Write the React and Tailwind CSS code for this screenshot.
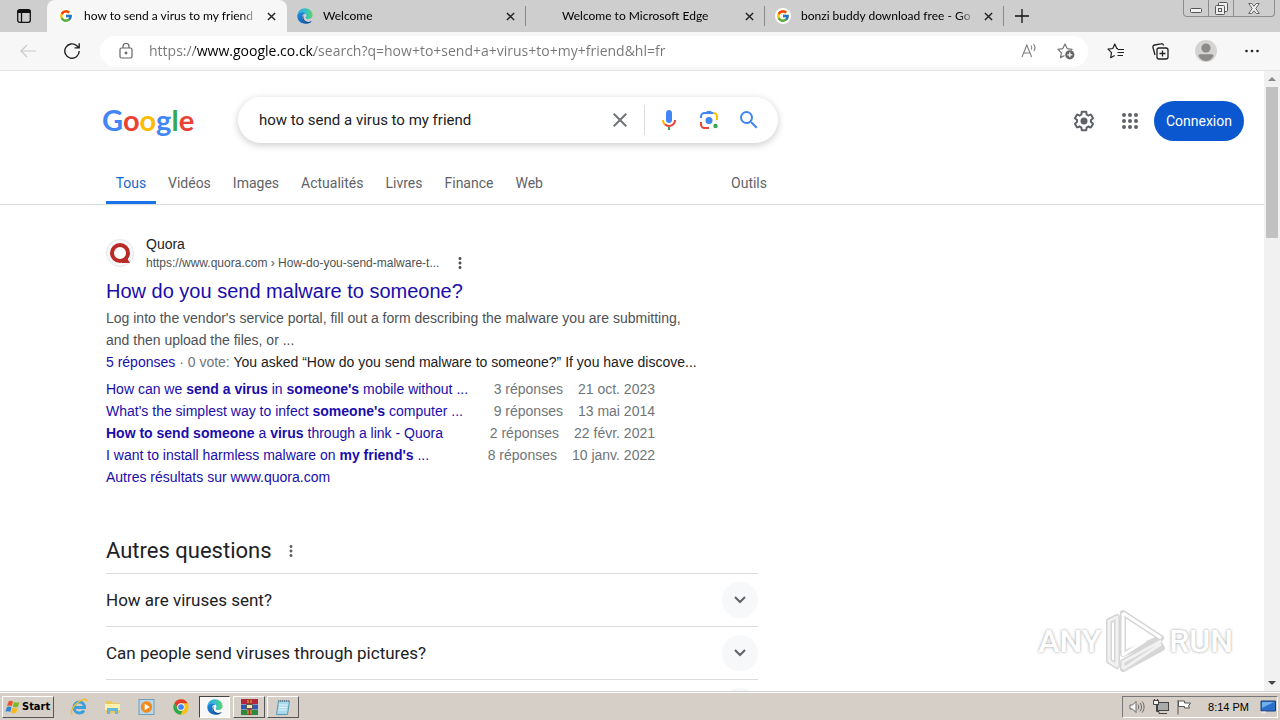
import { useState } from "react";
import { FcGoogle } from "react-icons/fc";
import { MdSearch, MdClose, MdMoreVert } from "react-icons/md";

const browserTabs = [
  { id: 1, title: "how to send a virus to my friend", icon: "google" },
  { id: 2, title: "Welcome", icon: "edge" },
  { id: 3, title: "Welcome to Microsoft Edge", icon: null },
  { id: 4, title: "bonzi buddy download free - Go", icon: "google" },
];

const searchTabs = ["Tous", "Vidéos", "Images", "Actualités", "Livres", "Finance", "Web"];

const discussions = [
  {
    link: <>How can we <b>send a virus</b> in <b>someone's</b> mobile without ...</>,
    answers: "3 réponses",
    date: "21 oct. 2023",
  },
  {
    link: <>What's the simplest way to infect <b>someone's</b> computer ...</>,
    answers: "9 réponses",
    date: "13 mai 2014",
  },
  {
    link: <><b>How to send someone</b> a <b>virus</b> through a link - Quora</>,
    answers: "2 réponses",
    date: "22 févr. 2021",
  },
  {
    link: <>I want to install harmless malware on <b>my friend's</b> ...</>,
    answers: "8 réponses",
    date: "10 janv. 2022",
  },
];

const questions = ["How are viruses sent?", "Can people send viruses through pictures?", ""];

function EdgeIcon({ className }) {
  return (
    <svg viewBox="0 0 24 24" className={className} aria-hidden="true">
      <defs>
        <linearGradient id="edgeTop" x1="0" y1="0.4" x2="1" y2="0.4">
          <stop offset="0" stopColor="#2aa7e8" />
          <stop offset="0.6" stopColor="#35c3c0" />
          <stop offset="1" stopColor="#62d35a" />
        </linearGradient>
        <linearGradient id="edgeBody" x1="0" y1="0" x2="0.8" y2="1">
          <stop offset="0" stopColor="#1b8ee0" />
          <stop offset="1" stopColor="#1259ae" />
        </linearGradient>
      </defs>
      <path fill="url(#edgeTop)" d="M.6 11C1 4.9 5.900 .5 12 .5c6.400 0 11.400 4.600 11.400 10.100 0 3.800-2.900 6-6.300 6-2.900 0-4.200-1-4.200-2 0-.8 1.200-1.100 1.200-3.100 0-2.700-2.500-5-6-5C4.600 6.500 2 8.300.6 11z" />
      <path fill="url(#edgeBody)" d="M.5 12.500C.5 9 4 6.500 8.100 6.500c2.300 0 4 1 5 2.300-3.300-.6-5.600 1.700-5.600 4.900 0 4 3.500 7.300 8 7.300 2.300 0 4.300-.7 5.600-1.500.5-.3.900.1.600.6-1.700 2-5 3.500-9 3.500C5.500 23.600.5 18.900.5 12.500z" />
      <path fill="#0c4390" d="M9.800 10.500c-3.800 3.300-1.500 9.500 4 11.300 3 .9 5.600 0 7.600-1.700-4.500 1.900-9.400.4-11.100-3.300-1-2.100-.8-4.200-.5-6.300z" />
    </svg>
  );
}

function ChromeIcon({ className }) {
  return (
    <svg viewBox="0 0 24 24" className={className} aria-hidden="true">
      <circle cx="12" cy="12" r="11.500" fill="#fbc116" />
      <path fill="#e33b2e" d="M2 6.300A11.500 11.500 0 0 1 22 6.300H12a5.700 5.700 0 0 0-5 8.500z" />
      <path fill="#2da94f" d="M2 6.300l5 8.600a5.700 5.700 0 0 0 7.300 2.300L11.500 23.500A11.500 11.500 0 0 1 2 6.300z" />
      <circle cx="12" cy="12" r="5.500" fill="#fff" />
      <circle cx="12" cy="12" r="4.300" fill="#4285f4" />
    </svg>
  );
}

function CloseX() {
  return (
    <svg viewBox="0 0 10 10" className="h-[9px] w-[9px]" stroke="#222" strokeWidth="1.600" aria-hidden="true">
      <path d="M1 1l8 8M9 1L1 9" />
    </svg>
  );
}

function BrowserTab({ tab, active, onSelect }) {
  return (
    <div
      className={
        active
          ? "flex w-[240px] items-center rounded-t-lg bg-[#f7f7f7] pl-[11px] pr-[11px]"
          : "flex w-[239px] items-center pl-[10px]"
      }
    >
      <button onClick={onSelect} className="flex min-w-0 flex-1 items-center gap-[10px] text-left">
        {tab.icon === "google" && (
          <span className="flex h-4 w-4 shrink-0 items-center justify-center rounded-full bg-white">
            <FcGoogle className="h-[14px] w-[14px]" />
          </span>
        )}
        {tab.icon === "edge" && <EdgeIcon className="h-4 w-4 shrink-0" />}
        {!tab.icon && <span className="h-4 w-4 shrink-0" />}
        <span className="flex-1 overflow-hidden whitespace-nowrap font-[Lato,'Open_Sans',sans-serif] text-xs text-black [mask-image:linear-gradient(to_right,black_90%,transparent)]">
          {tab.title}
        </span>
      </button>
      <button aria-label="Close tab" className={active ? "ml-2" : "ml-2 mr-[10px]"}>
        <CloseX />
      </button>
      {!active && <span className="h-5 w-px bg-[#888]" />}
    </div>
  );
}

function WindowButtons() {
  return (
    <div className="mr-[5px] flex h-[17px] rounded-b border border-t-0 border-[#8d8d8d]">
      <button aria-label="Minimize" className="flex w-[25px] items-center justify-center border-r border-[#8d8d8d]">
        <svg viewBox="0 0 12 5" className="mt-1 h-[5px] w-3" fill="#f2f2f2" stroke="#555">
          <rect x=".5" y=".5" width="11" height="4" rx="1" />
        </svg>
      </button>
      <button aria-label="Restore" className="flex w-[25px] items-center justify-center border-r border-[#8d8d8d]">
        <svg viewBox="0 0 13 13" className="h-[13px] w-[13px]" fill="#eee" stroke="#555">
          <rect x="3.500" y=".5" width="9" height="9" rx="1" />
          <rect x=".5" y="3.500" width="9" height="9" rx="1" />
          <rect x="3.500" y="6.500" width="3" height="3" />
        </svg>
      </button>
      <button aria-label="Close" className="flex w-10 items-center justify-center">
        <svg viewBox="0 0 12 11" className="h-[11px] w-3" fill="#eee" stroke="#666">
          <path d="M.7.5h3L6 3.200 8.300.5h3L7.800 5.500l3.500 5h-3L6 7.800l-2.300 2.700h-3l3.500-5z" />
        </svg>
      </button>
    </div>
  );
}

function TabStrip() {
  const [active, setActive] = useState(1);
  return (
    <div className="flex h-8 shrink-0 justify-between bg-[#cecece]">
      <div className="flex">
        <button aria-label="Tab actions" className="flex w-[47px] items-center justify-center">
          <svg viewBox="0 0 14 14" className="h-[14px] w-[14px]" fill="none" stroke="#111" strokeWidth="1.300">
            <rect x=".7" y=".7" width="12.600" height="12.600" rx="2" />
            <path d="M.7 2.500h12.600" strokeWidth="3" />
            <path d="M4.500 3v10" />
          </svg>
        </button>
        {browserTabs.map((tab) => (
          <BrowserTab key={tab.id} tab={tab} active={tab.id === active} onSelect={() => setActive(tab.id)} />
        ))}
        <button aria-label="New tab" className="flex w-9 items-center justify-center">
          <svg viewBox="0 0 14 14" className="h-[14px] w-[14px]" stroke="#111" strokeWidth="1.300">
            <path d="M7 0v14M0 7h14" />
          </svg>
        </button>
      </div>
      <WindowButtons />
    </div>
  );
}

function Toolbar() {
  const [url, setUrl] = useState("https://www.google.co.ck/search?q=how+to+send+a+virus+to+my+friend&hl=fr");
  return (
    <div className="flex h-[39px] shrink-0 items-center border-b border-[#e5e5e5] bg-[#f7f7f7]">
      <button aria-label="Back" className="ml-5 flex w-4 justify-center">
        <svg viewBox="0 0 16 14" className="h-[14px] w-4" fill="none" stroke="#c9c9c9" strokeWidth="1.200">
          <path d="M16 7H1M7 1L1 7l6 6" />
        </svg>
      </button>
      <button aria-label="Refresh" className="ml-7 flex w-4 justify-center">
        <svg viewBox="0 0 16 16" className="h-4 w-4" fill="none" stroke="#222" strokeWidth="1.400">
          <path d="M15.200 8A7.200 7.200 0 1 1 12.800 2.700L15 4.800M15.200 .3v4.600h-4.600" />
        </svg>
      </button>
      <div className="ml-5 flex h-[31px] flex-1 items-center rounded-full bg-white pl-[19px] pr-[13px]">
        <svg viewBox="0 0 14 16" className="h-4 w-[14px] shrink-0" fill="none" stroke="#666" strokeWidth="1.200">
          <rect x="1" y="5" width="12" height="10" rx="1.500" />
          <path d="M4 5V3.500a3 3 0 0 1 6 0V5" />
          <circle cx="7" cy="10" r=".8" fill="#666" />
        </svg>
        <input
          aria-label="Address"
          value={url}
          onChange={(e) => setUrl(e.target.value)}
          className="ml-4 min-w-0 flex-1 bg-[linear-gradient(to_right,#757575_46px,#000_46px,#000_165px,#757575_165px)] bg-clip-text font-['Open_Sans','Noto_Sans',sans-serif] text-sm text-transparent outline-none"
        />
        <button aria-label="Read aloud">
          <svg viewBox="0 0 16 16" className="h-4 w-4" fill="none" stroke="#808080" strokeWidth="1.100">
            <path d="M1 14L5.800 2 10.600 14M2.600 10h6.400M10 2.500c1 1.200 1 2.800.3 4M12.500 1c1.800 2 1.700 4.800.4 7" />
          </svg>
        </button>
        <button aria-label="Add to favorites" className="ml-5">
          <svg viewBox="0 0 18 18" className="h-[18px] w-[18px]" fill="none" stroke="#777" strokeWidth="1.200">
            <path strokeLinejoin="round" d="M7.500 13.500l-4 2.100.9-4.800L1 7.300l4.800-.7L8 2l2.200 4.600 4.800.7-1 1" />
            <circle cx="12.800" cy="12.800" r="4.600" fill="#666" stroke="none" />
            <path stroke="#fff" d="M12.800 10.300v5M10.300 12.800h5" />
          </svg>
        </button>
      </div>
      <button aria-label="Favorites" className="ml-[19px]">
        <svg viewBox="0 0 18 16" className="h-4 w-[18px]" fill="none" stroke="#222" strokeWidth="1.200" strokeLinejoin="round">
          <path d="M11 5.600L9.800 5.500 7.800 1 5.800 5.500 1 6.200l3.500 3.500-.8 5 4-2.200M10.500 6.500H17M10.500 9.500H17M10.500 12.500H16" />
        </svg>
      </button>
      <button aria-label="Collections" className="ml-[27px]">
        <svg viewBox="0 0 17 17" className="h-[17px] w-[17px]" fill="none" stroke="#222" strokeWidth="1.300">
          <rect x="5" y="5" width="11" height="11" rx="2" />
          <path d="M10.500 7.500v6M7.500 10.500h6M3 12L1 4.500A2 2 0 0 1 2.500 2L9 .8A2 2 0 0 1 11.500 2.500" />
        </svg>
      </button>
      <button aria-label="Profile" className="ml-[26px]">
        <svg viewBox="0 0 22 22" className="h-[22px] w-[22px]">
          <circle cx="11" cy="11" r="11" fill="#d5d3d1" />
          <circle cx="11" cy="8" r="4.600" fill="#8c8a88" />
          <path fill="#8c8a88" d="M3.500 16c0-1 .7-1.700 1.700-1.700h11.600c1 0 1.700.7 1.700 1.700-1.600 3-4.300 5-7.500 5s-5.900-2-7.500-5z" />
        </svg>
      </button>
      <button aria-label="Settings and more" className="ml-7 mr-[21px]">
        <svg viewBox="0 0 14 4" className="h-1 w-[14px]" fill="#222">
          <circle cx="1.500" cy="2" r="1.300" />
          <circle cx="7" cy="2" r="1.300" />
          <circle cx="12.500" cy="2" r="1.300" />
        </svg>
      </button>
    </div>
  );
}

function GoogleLogo() {
  return (
    <a href="#home" aria-label="Google" className="w-[136px] shrink-0 font-[Lato,sans-serif] text-[29px] leading-8 font-bold">
      <span className="text-[#4285f4]">G</span>
      <span className="text-[#ea4335]">o</span>
      <span className="text-[#fbbc05]">o</span>
      <span className="text-[#4285f4]">g</span>
      <span className="text-[#34a853]">l</span>
      <span className="text-[#ea4335]">e</span>
    </a>
  );
}

function SearchHeader() {
  const [query, setQuery] = useState("how to send a virus to my friend");
  return (
    <header className="border-b border-[#dadce0] pt-[26px]">
      <div className="flex items-center pl-[102px] pr-5">
        <GoogleLogo />
        <form
          onSubmit={(e) => e.preventDefault()}
          className="flex h-[46px] w-[540px] items-center rounded-full bg-white pl-[21px] pr-[17px] shadow-[0_2px_6px_1px_rgba(60,64,67,0.22)]"
        >
          <input
            aria-label="Rechercher"
            value={query}
            onChange={(e) => setQuery(e.target.value)}
            className="min-w-0 flex-1 pt-0.5 font-[Roboto,sans-serif] text-[15px] text-[#202124] outline-none"
          />
          <button type="button" aria-label="Effacer" onClick={() => setQuery("")}>
            <MdClose className="h-6 w-6 text-[#70757a]" />
          </button>
          <span className="ml-3 h-[30px] w-px bg-[#dadce0]" />
          <button type="button" aria-label="Recherche vocale" className="ml-3">
            <svg viewBox="0 0 24 24" className="h-6 w-6">
              <path fill="#4285f4" d="M12 15c1.700 0 3-1.300 3-3V5c0-1.700-1.300-3-3-3S9 3.300 9 5v7c0 1.700 1.300 3 3 3z" />
              <path fill="#34a853" d="M11 18.900h2V22h-2z" />
              <path fill="#fbbc05" d="M7 12H5c0 1.900.8 3.700 2.100 5l1.400-1.400A5 5 0 0 1 7 12z" />
              <path fill="#ea4335" d="M12 17a5 5 0 0 1-3.500-1.400L7.100 17A7 7 0 0 0 12 19c3.900 0 7-3.100 7-7h-2c0 2.800-2.200 5-5 5z" />
            </svg>
          </button>
          <button type="button" aria-label="Recherche par image" className="ml-4">
            <svg viewBox="0 0 24 24" className="h-6 w-6" fill="none" strokeWidth="2">
              <path stroke="#ea4335" d="M4 14v2.500A3.500 3.500 0 0 0 7.500 20H12" />
              <path stroke="#4285f4" d="M4 10V8.500A3.500 3.500 0 0 1 7.500 5h9" />
              <path stroke="#fbbc05" d="M16.500 5A3.500 3.500 0 0 1 20 8.500V12" />
              <path fill="#4285f4" d="M8.500 5L10 3h4l1.500 2z" />
              <circle cx="12" cy="12.500" r="3.500" fill="#4285f4" />
              <circle cx="18.500" cy="18" r="2.200" fill="#34a853" />
            </svg>
          </button>
          <button type="submit" aria-label="Recherche" className="ml-4">
            <MdSearch className="h-6 w-6 text-[#4285f4]" />
          </button>
        </form>
        <div className="ml-auto flex items-center pt-0.5">
          <button aria-label="Paramètres">
            <svg viewBox="0 0 24 24" className="h-6 w-6" fill="#5f6368">
              <path d="M13.850 22.250h-3.700c-.74 0-1.360-.54-1.450-1.270l-.27-1.890c-.27-.14-.53-.29-.79-.46l-1.800.72c-.7.26-1.470-.03-1.810-.65L2.200 15.530c-.35-.66-.2-1.440.36-1.880l1.530-1.190c-.01-.15-.02-.3-.02-.46 0-.15.010-.31.020-.46l-1.520-1.190c-.59-.45-.74-1.260-.37-1.880l1.850-3.190c.34-.62 1.110-.9 1.790-.63l1.810.73c.26-.17.52-.32.78-.46l.27-1.910c.09-.7.71-1.250 1.440-1.250h3.700c.74 0 1.360.54 1.450 1.270l.27 1.890c.27.14.53.29.79.46l1.800-.72c.71-.26 1.480.03 1.820.65l1.840 3.180c.36.66.2 1.440-.36 1.880l-1.520 1.190c.01.15.02.3.02.46s-.01.31-.02.46l1.520 1.190c.56.45.72 1.230.37 1.860l-1.860 3.220c-.34.62-1.110.9-1.800.63l-1.800-.72c-.26.17-.52.32-.78.46l-.27 1.910c-.1.680-.72 1.220-1.460 1.220zm-3.230-2h2.760l.37-2.550.53-.22c.44-.18.88-.44 1.340-.78l.45-.34 2.380.96 1.380-2.400-2.030-1.580.07-.56c.03-.26.06-.51.06-.78s-.03-.53-.06-.78l-.07-.56 2.030-1.580-1.390-2.400-2.390.96-.45-.35c-.42-.32-.87-.58-1.330-.77l-.52-.22-.37-2.550h-2.760l-.37 2.550-.53.21c-.44.19-.88.44-1.340.79l-.45.33-2.380-.95-1.390 2.390 2.030 1.580-.07.56a7 7 0 0 0-.06.79c0 .26.02.53.06.78l.07.56-2.030 1.580 1.380 2.400 2.390-.96.45.35c.43.33.86.58 1.330.77l.53.22z" />
              <circle cx="12" cy="12" r="3.500" />
            </svg>
          </button>
          <button aria-label="Applications Google" className="ml-[26px] mr-4">
            <svg viewBox="0 0 16 16" className="h-4 w-4" fill="#5f6368">
              {[2, 8, 14].map((y) => [2, 8, 14].map((x) => <circle key={x + "-" + y} cx={x} cy={y} r="2" />))}
            </svg>
          </button>
          <a href="#login" className="flex h-10 items-center rounded-full bg-[#0b57d0] px-3 font-[Roboto,sans-serif] text-sm text-white">
            Connexion
          </a>
        </div>
      </div>

      <nav className="mt-[21px] flex h-10 w-[778px] pl-[106px] font-[Roboto,sans-serif] text-sm text-[#5f6368]">
        {searchTabs.map((label, i) => (
          <a
            key={label}
            href={"#" + label}
            className={
              i === 0
                ? "mr-px flex h-10 w-[50px] justify-center border-b-3 border-[#1a73e8] pt-[9px] text-[#1967d2]"
                : "flex h-10 items-start px-[11px] pt-[9px]"
            }
          >
            {label}
          </a>
        ))}
        <button className="ml-auto flex items-start pr-[11px] pt-[9px]">Outils</button>
      </nav>
    </header>
  );
}

function QuoraResult() {
  return (
    <article className="w-[600px]">
      <div className="flex items-center">
        <span className="flex h-7 w-7 items-center justify-center rounded-full border border-[#e3e6ea] bg-[#f7f8fa]">
          <svg viewBox="0 0 22 22" className="h-[22px] w-[22px]" aria-hidden="true">
            <circle cx="11" cy="11" r="8" fill="#fff" stroke="#b92b27" strokeWidth="4" />
            <path fill="#b92b27" d="M13 17.500l4-3 4 6.500h-8z" />
          </svg>
        </span>
        <div className="ml-3">
          <div className="text-sm leading-5 text-[#202124]">Quora</div>
          <div className="flex items-center text-xs leading-[18px] text-[#4d5156]">
            <cite className="not-italic">https://www.quora.com › How-do-you-send-malware-t...</cite>
            <button aria-label="À propos de ce résultat" className="ml-3">
              <MdMoreVert className="h-[18px] w-[18px]" />
            </button>
          </div>
        </div>
      </div>
      <h3 className="mt-[6px] text-xl leading-[26px] text-[#1a0dab]">
        <a href="#quora">How do you send malware to someone?</a>
      </h3>
      <p className="mt-[3px] leading-[22px] text-[#4d5156]">
        Log into the vendor's service portal, fill out a form describing the malware you are submitting, and then
        upload the files, or ...
      </p>
      <p className="whitespace-nowrap leading-[22px] text-[#202124]">
        <a href="#answers" className="text-[#1a0dab]">5 réponses</a>
        <span className="text-[#70757a]"> · 0 vote: </span>
        You asked “How do you send malware to someone?” If you have discove...
      </p>
      <ul className="mt-[5px] w-[549px]">
        {discussions.map((item) => (
          <li key={item.date} className="flex justify-between whitespace-nowrap leading-[22px] text-[#70757a]">
            <a href="#discussion" className="text-[#1a0dab]">{item.link}</a>
            <span className="flex gap-[15px]">
              <span>{item.answers}</span>
              <span>{item.date}</span>
            </span>
          </li>
        ))}
      </ul>
      <a href="#more" className="block leading-[22px] text-[#1a0dab]">Autres résultats sur www.quora.com</a>
    </article>
  );
}

function RelatedQuestions() {
  return (
    <section className="mt-11 w-[652px] text-[#202124]">
      <div className="mb-[3px] flex h-[38px] items-center gap-[10px]">
        <h2 className="font-[Roboto,sans-serif] text-[22px] leading-7">Autres questions</h2>
        <button aria-label="À propos">
          <MdMoreVert className="h-[18px] w-[18px] text-[#5f6368]" />
        </button>
      </div>
      {questions.map((question, i) => (
        <button
          key={i}
          aria-label={question ? undefined : "Autre question"}
          className="flex h-[53px] w-full items-center justify-between border-t border-[#dadce0] text-left"
        >
          <span className="font-[Roboto,sans-serif] text-[17px]">{question}</span>
          <span className="flex h-9 w-9 items-center justify-center rounded-full bg-[#f7f8f9]">
            <svg viewBox="0 0 12 8" className="h-2 w-3" fill="none" stroke="#5f6368" strokeWidth="2">
              <path d="M1 1l5 5 5-5" />
            </svg>
          </span>
        </button>
      ))}
    </section>
  );
}

function Watermark() {
  return (
    <div className="absolute right-[47px] bottom-[18px] flex items-center gap-1 font-[Roboto,sans-serif] text-[32px] font-medium text-white [text-shadow:0_0_3px_#999]">
      <span>ANY</span>
      <svg viewBox="0 0 60 64" className="h-16 w-[60px]" fill="none" strokeLinejoin="round" aria-hidden="true">
        <path stroke="#d6d6d6" strokeWidth="6" d="M18 4L56 29 18 45zM18 60v-7L54 34l3 5zM4 12v40l8 5V8z" />
        <path stroke="#fff" strokeWidth="3" d="M18 4L56 29M18 4v42l22-14L22 20" />
        <path stroke="#f1f1f1" strokeWidth="3" d="M18 60v-7L56 32M18 60l38-25M4 12v40l8 5V8z" />
      </svg>
      <span>RUN</span>
    </div>
  );
}

function Scrollbar() {
  return (
    <div className="flex w-4 shrink-0 flex-col items-center bg-[#f1f1f1]">
      <span className="flex h-4 items-center">
        <svg viewBox="0 0 8 4" className="h-1 w-2" fill="#8a8a8a"><path d="M0 4l4-4 4 4z" /></svg>
      </span>
      <span className="h-[151px] w-3 bg-[#c1c1c1]" />
      <span className="mt-auto flex h-4 items-center">
        <svg viewBox="0 0 8 4" className="h-1 w-2" fill="#444"><path d="M0 0l4 4 4-4z" /></svg>
      </span>
    </div>
  );
}

function Taskbar() {
  const raised = "border border-t-white border-l-white border-r-[#555] border-b-[#555]";
  return (
    <footer className="flex h-[29px] shrink-0 items-center border-t border-[#d0d0d0] bg-[#d6cfc7] px-[2px] pt-0.5 shadow-[inset_0_1px_0_#fff]">
      <button className={"flex h-[22px] w-[52px] items-center gap-px pl-[2px] font-['DejaVu_Sans_Condensed','Open_Sans',sans-serif] text-[11px] font-bold text-black " + raised}>
        <svg viewBox="0 0 16 16" className="h-4 w-4 shrink-0" aria-hidden="true">
          <path fill="#e8562a" d="M3.500 2.500C5 1.500 6.500 1.600 8 2.600L6.700 7.300C5.200 6.300 3.700 6.300 2 7.200z" />
          <path fill="#7db928" d="M9 3c1.700 1 3.300 1 5.500 0L13 7.800c-2 .9-3.700.8-5.300-.2z" />
          <path fill="#2f84d6" d="M1.800 8.200c1.600-.9 3.200-.8 4.700.2L5.200 13c-1.500-1-3-1-4.700-.1z" />
          <path fill="#f9b91c" d="M7.400 8.700c1.700 1 3.300 1 5.300.2L11.400 13.600c-2 .9-3.700.7-5.300-.2z" />
        </svg>
        Start
      </button>
      <button aria-label="Internet Explorer" className="ml-4">
        <svg viewBox="0 0 18 18" className="h-[18px] w-[18px]" fill="none">
          <path stroke="#3d9fdc" strokeWidth="3" d="M4 9.500h10.500C14.500 6 12.300 4 9.300 4S4 6.300 4 9.500s2.300 5.500 5.300 5.500c2 0 3.600-.8 4.700-2.500" />
          <path stroke="#efbe35" strokeWidth="1.500" d="M2.500 16.500C-.5 14 3 8 8.500 4S17 .5 16.500 3.500" />
        </svg>
      </button>
      <button aria-label="Explorer" className="ml-4">
        <svg viewBox="0 0 18 16" className="h-4 w-[18px]">
          <path fill="#e9c85f" d="M2 2h6l1 2h7v10H2z" />
          <path fill="#fdf0ac" d="M1 5h15v6H1z" />
          <path fill="#66b7de" d="M3 9h11v6h-3v-3H6v3H3z" />
        </svg>
      </button>
      <button aria-label="Media Player" className="ml-4">
        <svg viewBox="0 0 18 16" className="h-4 w-[18px]">
          <rect x="1" y=".5" width="15" height="15" fill="#b9d7ea" stroke="#6f9fbd" />
          <circle cx="8.500" cy="8" r="5.700" fill="#f28a1c" />
          <path fill="#fff" d="M6.700 4.800v6.400L11.700 8z" />
        </svg>
      </button>
      <button aria-label="Chrome" className="ml-[17px]">
        <ChromeIcon className="h-4 w-4" />
      </button>
      <button aria-label="Edge" className="ml-[10px] flex h-[22px] w-[31px] items-center justify-center border border-t-[#444] border-l-[#444] border-r-white border-b-white bg-[#f8f7f5]">
        <EdgeIcon className="h-4 w-4" />
      </button>
      <button aria-label="WinRAR" className={"ml-[3px] flex h-[22px] w-8 items-center justify-center " + raised}>
        <svg viewBox="0 0 17 16" className="h-4 w-[17px]">
          <path fill="#b1263a" d="M0 0h17v5H0z" />
          <path fill="#2f57b5" d="M0 5.500h17v5H0z" />
          <path fill="#2b8a3b" d="M0 11h17v5H0z" />
          <path fill="#a8322c" d="M6.500 0h4v16h-4z" />
          <path fill="#f3e6b0" stroke="#555" d="M5.500 5.500h6v4h-6z" />
          <path stroke="#e8b43a" d="M7 11v4M10 11v4M7 1v3M10 1v3" />
        </svg>
      </button>
      <button aria-label="Notepad" className={"ml-[2px] flex h-[22px] w-8 items-center justify-center " + raised}>
        <svg viewBox="0 0 14 16" className="h-4 w-[14px]">
          <path fill="#a9d9ec" stroke="#5b99b5" d="M2.500 2h11l-2 13.500h-11z" />
          <path stroke="#6b8b99" strokeDasharray="1 1" strokeWidth="2" d="M2 2h11" />
          <path stroke="#e8f6fb" d="M3 6h8.500M3 8.500h8M2.500 11h8" />
        </svg>
      </button>

      <div className="ml-auto flex h-[22px] items-center border border-t-[#777] border-l-[#777] border-r-white border-b-white pl-[6px] pr-px">
        <svg viewBox="0 0 16 14" className="h-[14px] w-4" fill="#fff" stroke="#666" aria-label="Volume">
          <path d="M1 5h2.500L7 1.500v11L3.500 9H1z" />
          <path fill="none" d="M9 4.500c1 1.500 1 3.500 0 5M11 2.800c2 2.500 2 6 0 8.500M13.200 1.500c2.500 3.500 2.500 7.500 0 11" />
        </svg>
        <svg viewBox="0 0 16 16" className="ml-2 h-4 w-4" fill="#f5f5f5" stroke="#444" aria-label="Network">
          <rect x="4.500" y="3.500" width="11" height="8" fill="#aaa" />
          <path d="M.5 1.500h5v4h-2v7H6v2h8" fill="none" />
          <path d="M.5 1.500h5v4h-5zM1.500 0v2M4.500 0v2" />
        </svg>
        <svg viewBox="0 0 16 16" className="ml-[7px] h-4 w-4" fill="#fff" stroke="#555" aria-label="Action center">
          <path d="M2 1v14.500M2.500 2h6v2h6l-2 3 1 2h-5V7.500h-6z" />
        </svg>
        <span className="ml-4 font-['Liberation_Sans',Arial,sans-serif] text-[11px] text-black">8:14 PM</span>
        <button aria-label="Show desktop" className="ml-[11px]">
          <svg viewBox="0 0 16 14" className="h-[14px] w-4">
            <path fill="#2c6fc9" stroke="#1c3f7a" d="M1 1h14.500v10H1z" />
            <path fill="#6fb0ef" d="M2 2h12L2 8z" />
            <path fill="#dfe7f0" d="M1 11.500h5v2H1z" />
          </svg>
        </button>
      </div>
    </footer>
  );
}

export default function App() {
  return (
    <div className="flex h-screen flex-col overflow-hidden bg-white">
      <TabStrip />
      <Toolbar />
      <div className="relative flex min-h-0 flex-1">
        <main className="min-w-0 flex-1 overflow-hidden font-['Liberation_Sans',Arial,sans-serif] text-sm">
          <SearchHeader />
          <div className="pl-[106px] pt-[29px]">
            <QuoraResult />
            <RelatedQuestions />
          </div>
        </main>
        <Scrollbar />
        <Watermark />
      </div>
      <Taskbar />
    </div>
  );
}
